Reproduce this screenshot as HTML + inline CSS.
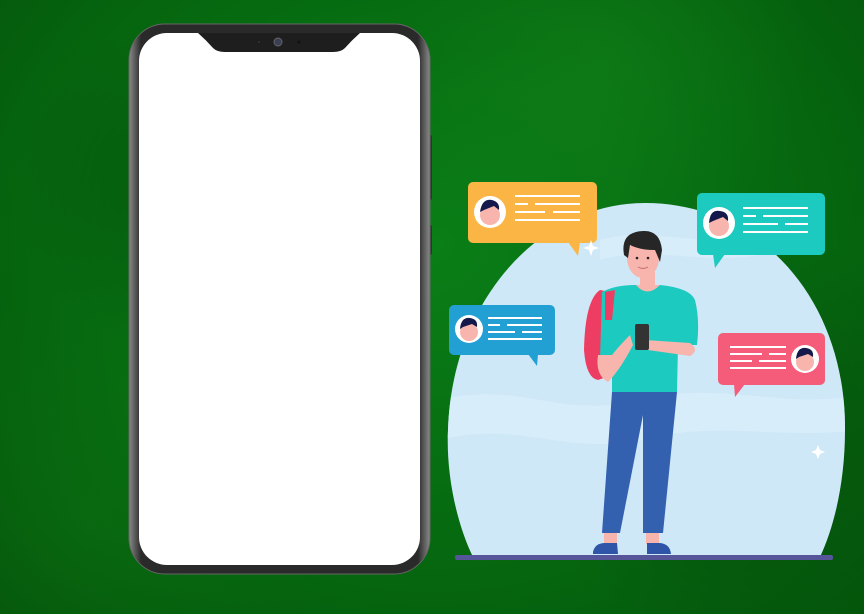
<!DOCTYPE html>
<html><head><style>
html,body{margin:0;padding:0}
body{width:864px;height:614px;overflow:hidden;position:relative;
background:radial-gradient(ellipse at 50% 40%,#0a7e17 0%,#066a10 55%,#04550b 100%);}
.tex{position:absolute;inset:0;background:
radial-gradient(circle at 20% 30%,rgba(0,0,0,.15),transparent 20%),
radial-gradient(circle at 70% 10%,rgba(40,160,40,.2),transparent 25%),
radial-gradient(circle at 85% 70%,rgba(0,0,0,.15),transparent 25%),
radial-gradient(circle at 10% 85%,rgba(30,150,30,.15),transparent 25%);}
</style></head><body>
<div class="tex"></div>
<svg width="864" height="614" style="position:absolute;left:0;top:0">
<defs>
<linearGradient id="fr" x1="0" x2="1"><stop offset="0" stop-color="#8a8a8a"/><stop offset=".04" stop-color="#2a2a2a"/><stop offset=".96" stop-color="#2a2a2a"/><stop offset="1" stop-color="#8a8a8a"/></linearGradient>
<clipPath id="bl"><path d="M473 557 C455 520 446 470 448 430 C452 300 540 203 645 203 C760 203 846 300 845 430 C845 480 835 525 820 557Z"/></clipPath>
</defs>
<rect x="427" y="135" width="5" height="65" rx="2" fill="#333"/>
<rect x="427" y="225" width="5" height="30" rx="2" fill="#333"/>
<rect x="129" y="24" width="301" height="550" rx="36" fill="url(#fr)" stroke="#666" stroke-width="1"/>
<rect x="139" y="33" width="281" height="532" rx="28" fill="#fff"/>
<path d="M198 33 L360 33 Q352 40 345 48 Q341 52 333 52 L225 52 Q217 52 213 48 Q206 40 198 33Z" fill="#1e1e1e"/>
<circle cx="278" cy="42" r="4" fill="#3a3f55" stroke="#666" stroke-width="1"/>
<circle cx="259" cy="42" r="1" fill="#333"/><circle cx="299" cy="42" r="1.5" fill="#111"/>
<path d="M473 557 C455 520 446 470 448 430 C452 300 540 203 645 203 C760 203 846 300 845 430 C845 480 835 525 820 557Z" fill="#cfe8f8"/>
<g clip-path="url(#bl)">
<path d="M440 400 C520 380 560 420 640 400 C720 380 780 410 860 395 L860 430 C780 440 720 420 640 440 C560 455 520 420 440 440Z" fill="#dcf0fb" opacity=".7"/>
<path d="M600 240 C650 225 700 250 760 235 L760 255 C700 265 650 245 600 260Z" fill="#dcf0fb" opacity=".6"/>
</g>
<rect x="455" y="555" width="378" height="5" rx="2" fill="#57559a"/>
<g>
<rect x="468" y="182" width="129" height="61" rx="5" fill="#fbb545"/>
<path d="M568 242 L580 242 L578 256Z" fill="#fbb545"/>
<circle cx="490" cy="212" r="16" fill="#fff"/><circle cx="490" cy="215" r="10" fill="#f7b5ad"/><path d="M480 212 Q482 198 492 200 Q500 202 499 210 L494 206 L484 210Z" fill="#14184a"/>
<g stroke="#fff" stroke-width="2"><line x1="515" y1="196" x2="580" y2="196"/><line x1="515" y1="204" x2="528" y2="204"/><line x1="535" y1="204" x2="580" y2="204"/><line x1="515" y1="212" x2="545" y2="212"/><line x1="553" y1="212" x2="580" y2="212"/><line x1="515" y1="220" x2="580" y2="220"/></g>
</g>
<g>
<rect x="697" y="193" width="128" height="62" rx="5" fill="#1dcabf"/>
<path d="M713 254 L725 254 L715 268Z" fill="#1dcabf"/>
<circle cx="719" cy="223" r="16" fill="#fff"/><circle cx="719" cy="226" r="10" fill="#f7b5ad"/><path d="M709 223 Q710 209 720 211 Q729 212 728 221 L723 217 L713 221Z" fill="#14184a"/>
<g stroke="#fff" stroke-width="2"><line x1="743" y1="208" x2="808" y2="208"/><line x1="743" y1="216" x2="756" y2="216"/><line x1="763" y1="216" x2="808" y2="216"/><line x1="743" y1="224" x2="778" y2="224"/><line x1="785" y1="224" x2="808" y2="224"/><line x1="743" y1="232" x2="808" y2="232"/></g>
</g>
<g>
<rect x="449" y="305" width="106" height="50" rx="5" fill="#229fd3"/>
<path d="M528 354 L538 354 L537 366Z" fill="#229fd3"/>
<circle cx="469" cy="329" r="14" fill="#fff"/><circle cx="469" cy="332" r="9" fill="#f7b5ad"/><path d="M460 329 Q461 317 470 318 Q478 319 477 327 L472 324 L463 327Z" fill="#14184a"/>
<g stroke="#fff" stroke-width="2"><line x1="488" y1="318" x2="542" y2="318"/><line x1="488" y1="325" x2="500" y2="325"/><line x1="507" y1="325" x2="542" y2="325"/><line x1="488" y1="332" x2="515" y2="332"/><line x1="522" y1="332" x2="542" y2="332"/><line x1="488" y1="339" x2="542" y2="339"/></g>
</g>
<g>
<rect x="718" y="333" width="107" height="52" rx="5" fill="#f55c7a"/>
<path d="M734 384 L745 384 L735 397Z" fill="#f55c7a"/>
<circle cx="805" cy="359" r="14" fill="#fff"/><circle cx="805" cy="362" r="9" fill="#f7b5ad"/><path d="M796 359 Q797 347 806 348 Q814 349 813 357 L808 354 L799 357Z" fill="#14184a"/>
<g stroke="#fff" stroke-width="2"><line x1="730" y1="347" x2="786" y2="347"/><line x1="730" y1="354" x2="762" y2="354"/><line x1="769" y1="354" x2="786" y2="354"/><line x1="730" y1="361" x2="752" y2="361"/><line x1="759" y1="361" x2="786" y2="361"/><line x1="730" y1="368" x2="786" y2="368"/></g>
</g>
<path d="M591 240 l2 6 6 2 -6 2 -2 6 -2 -6 -6 -2 6 -2Z" fill="#fff"/>
<path d="M818 445 l2 5 5 2 -5 2 -2 5 -2 -5 -5 -2 5 -2Z" fill="#fff"/>
<path d="M600 290 Q585 300 584 350 Q586 378 598 380 L612 375 L610 292Z" fill="#ee3d62"/>
<path d="M612 392 L677 392 L663 533 L643 533 L643 415 L620 533 L602 533Z" fill="#3460b0"/>
<rect x="604" y="533" width="13" height="11" fill="#f7b5ad"/><rect x="646" y="533" width="13" height="11" fill="#f7b5ad"/>
<path d="M593 552 Q595 543 605 543 L617 543 L618 554 L593 554Z" fill="#2f55a8"/>
<path d="M647 543 L660 543 Q670 544 671 554 L647 554Z" fill="#2f55a8"/>
<path d="M640 272 L655 272 L655 292 L640 292Z" fill="#f7b5ad"/>
<path d="M602 292 Q615 285 635 285 L660 285 Q690 288 695 300 Q700 320 697 345 L678 345 L677 392 L612 392 L612 360 L600 360Z" fill="#1dcabf"/>
<path d="M636 285 Q647 298 660 285Z" fill="#f7b5ad"/>
<path d="M598 355 Q595 375 608 382 Q620 370 633 345 L630 335 Q620 345 612 355Z" fill="#f7b5ad"/>
<path d="M645 340 L690 343 Q700 350 690 356 L648 350Z" fill="#f7b5ad"/>
<path d="M605 292 L615 290 L612 320 L605 320Z" fill="#ee3d62"/>
<rect x="635" y="324" width="14" height="26" rx="2" fill="#333"/>
<ellipse cx="643" cy="258" rx="16" ry="20" fill="#f7b5ad"/>
<path d="M624 255 Q620 232 643 231 Q660 230 662 250 L660 262 L655 250 Q640 250 630 245 L628 258Z" fill="#262626"/>
<circle cx="637" cy="258" r="1.3" fill="#222"/><circle cx="648" cy="258" r="1.3" fill="#222"/>
<path d="M638 267 Q643 270 648 267" stroke="#c07070" stroke-width="1" fill="none"/>
</svg>
</body></html>
